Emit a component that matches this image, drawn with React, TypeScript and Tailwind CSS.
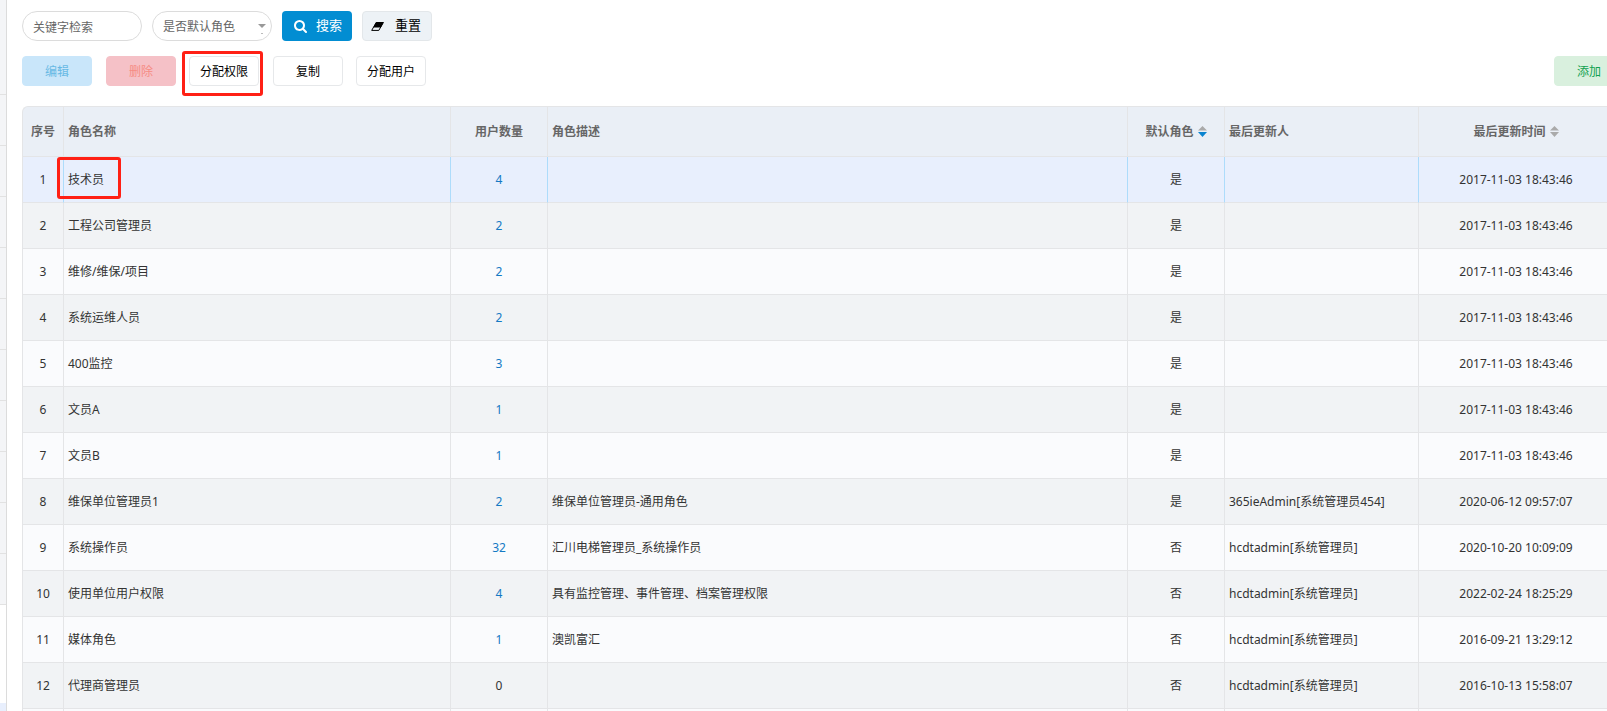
import type { ReactNode } from "react";

type Role = {
  name: string;
  users: number;
  desc: string;
  isDefault: boolean;
  updatedBy: string;
  updatedAt: string;
};

const SEED_TIME = "2017-11-03 18:43:46";

const roles: Role[] = [
  { name: "技术员", users: 4, desc: "", isDefault: true, updatedBy: "", updatedAt: SEED_TIME },
  { name: "工程公司管理员", users: 2, desc: "", isDefault: true, updatedBy: "", updatedAt: SEED_TIME },
  { name: "维修/维保/项目", users: 2, desc: "", isDefault: true, updatedBy: "", updatedAt: SEED_TIME },
  { name: "系统运维人员", users: 2, desc: "", isDefault: true, updatedBy: "", updatedAt: SEED_TIME },
  { name: "400监控", users: 3, desc: "", isDefault: true, updatedBy: "", updatedAt: SEED_TIME },
  { name: "文员A", users: 1, desc: "", isDefault: true, updatedBy: "", updatedAt: SEED_TIME },
  { name: "文员B", users: 1, desc: "", isDefault: true, updatedBy: "", updatedAt: SEED_TIME },
  { name: "维保单位管理员1", users: 2, desc: "维保单位管理员-通用角色", isDefault: true, updatedBy: "365ieAdmin[系统管理员454]", updatedAt: "2020-06-12 09:57:07" },
  { name: "系统操作员", users: 32, desc: "汇川电梯管理员_系统操作员", isDefault: false, updatedBy: "hcdtadmin[系统管理员]", updatedAt: "2020-10-20 10:09:09" },
  { name: "使用单位用户权限", users: 4, desc: "具有监控管理、事件管理、档案管理权限", isDefault: false, updatedBy: "hcdtadmin[系统管理员]", updatedAt: "2022-02-24 18:25:29" },
  { name: "媒体角色", users: 1, desc: "澳凯富汇", isDefault: false, updatedBy: "hcdtadmin[系统管理员]", updatedAt: "2016-09-21 13:29:12" },
  { name: "代理商管理员", users: 0, desc: "", isDefault: false, updatedBy: "hcdtadmin[系统管理员]", updatedAt: "2016-10-13 15:58:07" },
];

function SearchIcon() {
  return (
    <svg viewBox="64 128 1664 1664" className="size-[13px]" fill="currentColor" aria-hidden="true">
      <path d="M1216 832q0-185-131.5-316.5t-316.5-131.5-316.5 131.5-131.5 316.5 131.5 316.5 316.5 131.5 316.5-131.5 131.5-316.5zm512 832q0 52-38 90t-90 38q-54 0-90-38l-343-342q-179 124-399 124-143 0-273.5-55.5t-225-150-150-225-55.5-273.5 55.5-273.5 150-225 225-150 273.5-55.5 273.5 55.5 225 150 150 225 55.5 273.5q0 220-124 399l343 343q37 37 37 90z" />
    </svg>
  );
}

function EraserIcon() {
  return (
    <svg viewBox="0 0 13 9" className="h-[9px] w-[13px]" aria-hidden="true">
      <path d="M5.2 0.5H12.4L7.8 8.4H0.7z" fill="none" stroke="#000" strokeWidth="1" strokeLinejoin="round" />
      <path d="M5 0.3H12.6L9.9 5.4H2.3z" fill="#000" />
    </svg>
  );
}

function SortIcon({ descending = false }: { descending?: boolean }) {
  return (
    <svg viewBox="0 0 9 11" className="h-[11px] w-[9px]" aria-hidden="true">
      <path d="M4.5 0L9 4.5H0z" fill="#aaaaaa" />
      <path d="M0 6H9L4.5 11z" fill={descending ? "#0a84d0" : "#aaaaaa"} />
    </svg>
  );
}

function ToolButton({ className, children, disabled }: { className: string; children: ReactNode; disabled?: boolean }) {
  return (
    <button type="button" disabled={disabled} className={`h-[30px] w-[70px] shrink-0 rounded border pt-0.5 ${className}`}>
      {children}
    </button>
  );
}

const PLAIN = "border-[#e6e8ea] bg-white text-black";

export default function App() {
  return (
    <div className="flex h-screen overflow-hidden bg-white font-['Noto_Sans','Noto_Sans_CJK_SC',sans-serif] text-xs text-[#333]">
      <aside className="flex w-[7px] shrink-0 flex-col border-r border-[#dcdcdc]">
        <div className="h-[95px] shrink-0 border-b border-[#e2e2e2] bg-[#f4f5f7]" />
        {Array.from({ length: 10 }, (_, i) => (
          <div key={i} className="h-[51px] shrink-0 border-b border-[#e2e2e2] bg-[#f4f5f7]" />
        ))}
        <div className="h-[98px] shrink-0" />
        <div className="grow bg-[#e8effd]" />
      </aside>

      <main className="-mr-[17px] min-w-0 grow pt-[11px] pl-[15px]">
        <form className="flex gap-[10px]" onSubmit={(e) => e.preventDefault()}>
          <input
            type="text"
            aria-label="关键字检索"
            placeholder="关键字检索"
            className="h-[30px] w-[120px] rounded-full border border-[#dcdcdc] px-[10px] pt-0.5 placeholder:text-[#666]"
          />
          <div className="relative">
            <select
              aria-label="是否默认角色"
              className="h-[30px] w-[120px] appearance-none rounded-full border border-[#dcdcdc] bg-white px-[10px] pt-0.5 text-[#666]"
            >
              <option>是否默认角色</option>
              <option>是</option>
              <option>否</option>
            </select>
            <svg viewBox="0 0 8 10" className="pointer-events-none absolute top-[13px] right-[6px] h-[10px] w-2" aria-hidden="true">
              <path d="M0 0H8L4 4z" fill="#999" />
              <path d="M3 9H5V10H3z" fill="#bbb" />
            </svg>
          </div>
          <button type="submit" className="flex h-[30px] w-[70px] items-center gap-[9px] rounded bg-[#028dd2] pl-3 text-[13px] text-white">
            <SearchIcon />
            搜索
          </button>
          <button type="reset" className="flex h-[30px] w-[70px] items-center gap-[11px] rounded border border-[#e3e7ea] bg-[#edf2f6] pl-2 text-[13px] text-black">
            <EraserIcon />
            重置
          </button>
        </form>

        <div className="mt-[15px] flex gap-[13px]">
          <div className="flex gap-[14px]">
            <ToolButton disabled className="border-[#c9e6fa] bg-[#c9e6fa] text-[#67b9e4]">编辑</ToolButton>
            <ToolButton disabled className="border-[#f5c1c7] bg-[#f5c1c7] text-[#f58c84]">删除</ToolButton>
          </div>
          <div className="flex gap-[14px]">
            <div className="relative">
              <ToolButton className={PLAIN}>分配权限</ToolButton>
              <div className="pointer-events-none absolute -top-[5px] -left-[7px] h-[45px] w-[81px] rounded-[3px] border-3 border-[#ff2015]" />
            </div>
            <ToolButton className={PLAIN}>复制</ToolButton>
          </div>
          <ToolButton className={PLAIN}>分配用户</ToolButton>
          <ToolButton className="ml-auto border-[#d9f0de] bg-[#d9f0de] text-[#12a150]">添加</ToolButton>
        </div>

        <div className="mt-5 mr-[10px] rounded-tl-md border-t border-l border-[#e4e5e7] bg-[#eaeff6]">
          <table className="w-full table-fixed border-separate border-spacing-0">
            <colgroup>
              <col className="w-[41px]" />
              <col className="w-[387px]" />
              <col className="w-[97px]" />
              <col />
              <col className="w-[97px]" />
              <col className="w-[194px]" />
              <col className="w-[195px]" />
            </colgroup>
            <thead>
              <tr className="text-left text-[#666] *:h-[50px] *:border-r *:border-b *:border-[#e4e5e7] *:px-1 *:font-bold">
                <th className="text-center whitespace-nowrap">序号</th>
                <th>角色名称</th>
                <th className="text-center">用户数量</th>
                <th>角色描述</th>
                <th>
                  <span className="flex items-center justify-center gap-1">
                    默认角色
                    <SortIcon descending />
                  </span>
                </th>
                <th>最后更新人</th>
                <th>
                  <span className="flex items-center justify-center gap-1">
                    最后更新时间
                    <SortIcon />
                  </span>
                </th>
              </tr>
            </thead>
            <tbody>
              {roles.map((role, i) => {
                const tone =
                  i === 0
                    ? "bg-[#e8effd] *:border-r-[#addcfb]"
                    : i % 2 === 1
                      ? "bg-[#f1f3f5] *:border-r-[#e4e5e7]"
                      : "bg-[#fafbfd] *:border-r-[#e4e5e7]";
                return (
                  <tr key={role.name} className={`*:h-[46px] *:border-r *:border-b *:border-b-[#e4e5e7] *:px-1 ${tone}`}>
                    <td className="text-center">{i + 1}</td>
                    <td className="relative">
                      {role.name}
                      {i === 0 && (
                        <div className="pointer-events-none absolute top-0 -left-[7px] h-[42px] w-[64px] rounded-[3px] border-3 border-[#ff2015]" />
                      )}
                    </td>
                    <td className="text-center">
                      {role.users > 0 ? (
                        <a href="#users" className="text-[#1479c4]">{role.users}</a>
                      ) : (
                        role.users
                      )}
                    </td>
                    <td>{role.desc}</td>
                    <td className="text-center">{role.isDefault ? "是" : "否"}</td>
                    <td>{role.updatedBy}</td>
                    <td className="text-center">{role.updatedAt}</td>
                  </tr>
                );
              })}
              <tr className="bg-[#fafbfd] *:h-[46px] *:border-r *:border-[#e4e5e7]">
                <td /><td /><td /><td /><td /><td /><td />
              </tr>
            </tbody>
          </table>
        </div>
      </main>
    </div>
  );
}
